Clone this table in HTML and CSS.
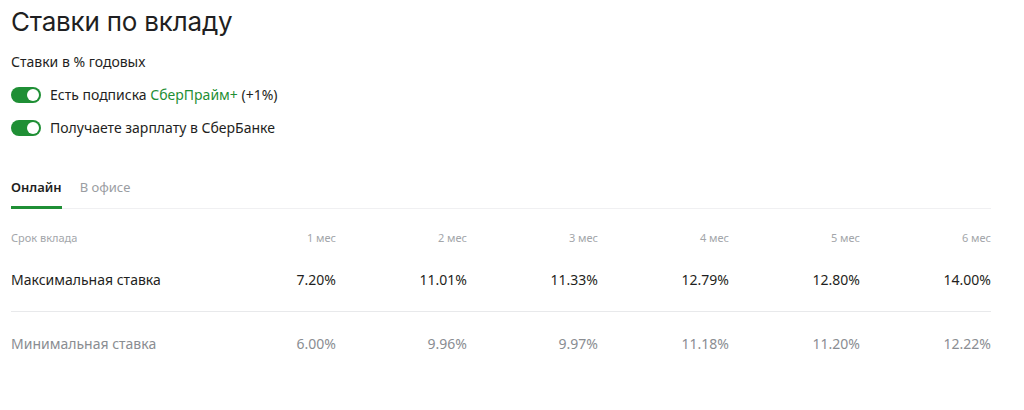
FILE: index.html
```html
<!DOCTYPE html>
<html>
<head>
    <title>Ставки по вкладу</title>
    <link rel="stylesheet" href="styles.css">
</head>
<body>

<div class="rates">
    <h2>Ставки по вкладу</h2>
    <div class="caption">Ставки в % годовых</div>

    <label class="switch-row">
        <span class="switch on"></span>
        <span>Есть подписка <span class="prime">СберПрайм+</span> (+1%)</span>
    </label>
    <label class="switch-row">
        <span class="switch on"></span>
        <span>Получаете зарплату в СберБанке</span>
    </label>

    <div class="tabs">
        <div class="tab active">Онлайн</div>
        <div class="tab">В офисе</div>
    </div>

    <div class="table">
        <div class="row head">
            <div class="cell label">Срок вклада</div>
            <div class="cell">1 мес</div>
            <div class="cell">2 мес</div>
            <div class="cell">3 мес</div>
            <div class="cell">4 мес</div>
            <div class="cell">5 мес</div>
            <div class="cell">6 мес</div>
        </div>
        <div class="row max">
            <div class="cell label">Максимальная ставка</div>
            <div class="cell">7.20%</div>
            <div class="cell">11.01%</div>
            <div class="cell">11.33%</div>
            <div class="cell">12.79%</div>
            <div class="cell">12.80%</div>
            <div class="cell">14.00%</div>
        </div>
        <div class="row min">
            <div class="cell label">Минимальная ставка</div>
            <div class="cell">6.00%</div>
            <div class="cell">9.96%</div>
            <div class="cell">9.97%</div>
            <div class="cell">11.18%</div>
            <div class="cell">11.20%</div>
            <div class="cell">12.22%</div>
        </div>
    </div>
</div>

</body>
</html>
```

FILE: styles.css
```css
body {
    margin: 0;
    font-family: 'Noto Sans', 'Open Sans', sans-serif;
    color: #1f1f22;
    background: #fff;
}

.rates {
    width: 980px;
    padding: 0 0 0 11px;
}

/* Title */
h2 {
    margin: 0;
    padding-top: 5px;
    font-family: 'Inter', 'Noto Sans', sans-serif;
    font-size: 26px;
    font-weight: 400;
    line-height: 34px;
    letter-spacing: -0.2px;
}

.caption {
    margin-top: 13px;
    font-size: 14px;
    line-height: 19px;
}

/* Switches */
.switch-row {
    display: flex;
    align-items: center;
    gap: 9px;
    font-size: 14px;
    line-height: 19px;
}

.caption + .switch-row {
    margin-top: 14px;
}

.switch-row + .switch-row {
    margin-top: 14px;
}

.switch {
    position: relative;
    width: 30px;
    height: 16px;
    border-radius: 8px;
    background: #bfc3c7;
    flex: none;
}

.switch.on {
    background: #1f8f35;
}

.switch::after {
    content: "";
    position: absolute;
    top: 2px;
    left: 2px;
    width: 12px;
    height: 12px;
    border-radius: 50%;
    background: #fff;
}

.switch.on::after {
    left: 16px;
}

.prime {
    color: #1f8f35;
}

/* Tabs */
.tabs {
    display: flex;
    gap: 18px;
    margin-top: 41px;
    border-bottom: 1px solid #f0f0f2;
}

.tab {
    font-size: 13px;
    line-height: 18px;
    padding-bottom: 10px;
    color: #9a9da2;
    border-bottom: 3px solid transparent;
    margin-bottom: -1px;
}

.tab.active {
    color: #1f1f22;
    font-weight: 600;
    border-bottom-color: #1f8f35;
}

/* Table */
.table {
    margin-top: 21px;
}

.row {
    display: grid;
    grid-template-columns: 194px repeat(6, 1fr);
    align-items: center;
}

.cell {
    text-align: right;
}

.cell.label {
    text-align: left;
}

.row.head {
    font-size: 11px;
    line-height: 15px;
    color: #a3a6aa;
}

.row.max {
    margin-top: 25px;
    padding-bottom: 22px;
    border-bottom: 1px solid #e8e9eb;
    font-size: 14px;
    line-height: 19px;
}

.row.min {
    padding-top: 22px;
    font-size: 14px;
    line-height: 19px;
    color: #8a8d92;
}
```
